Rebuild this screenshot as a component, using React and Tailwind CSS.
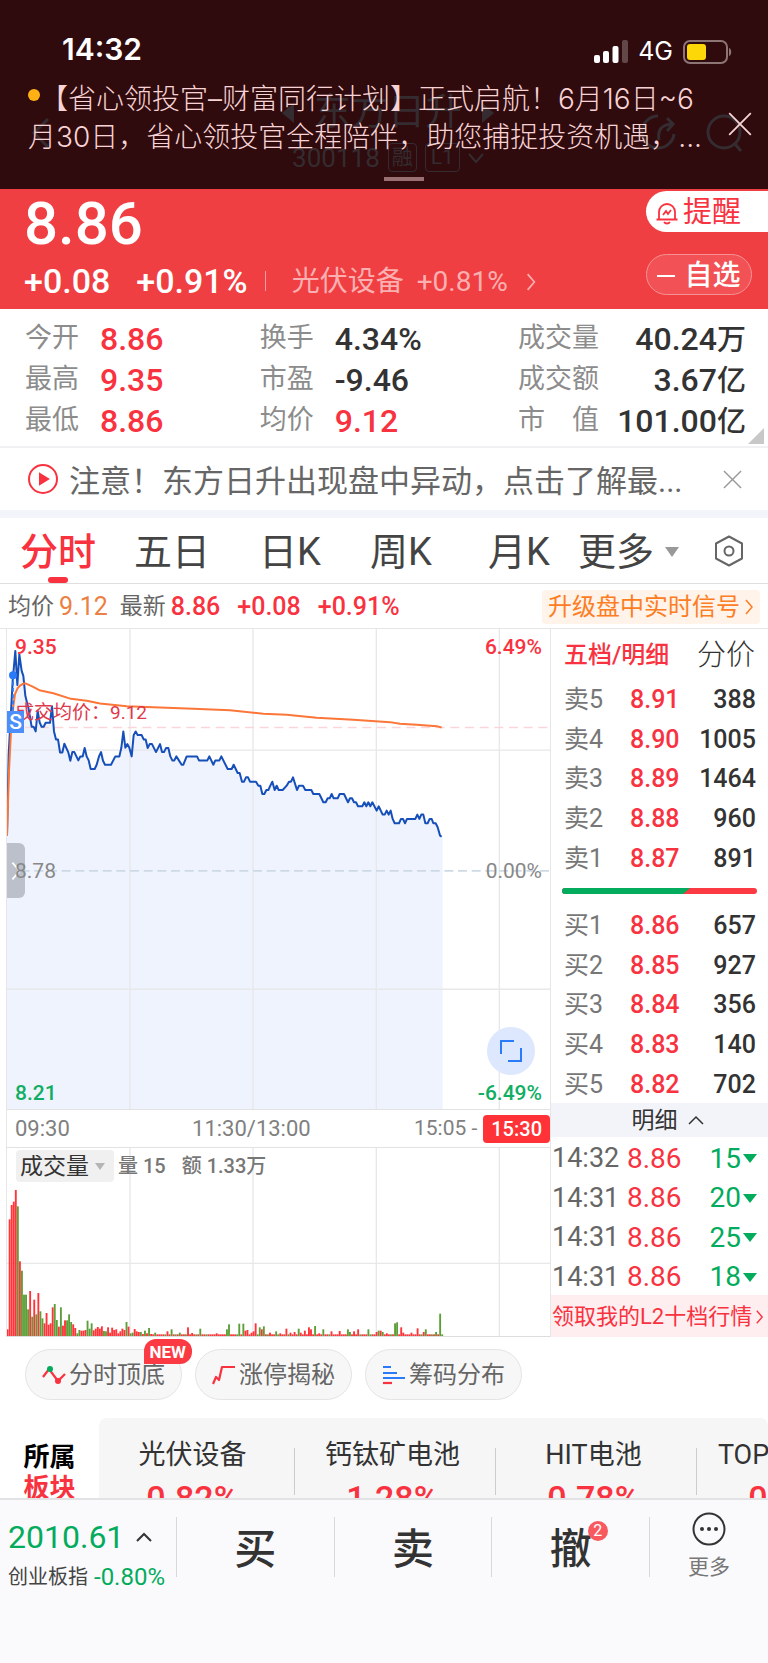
import { clsx } from 'clsx';

const STATS = [
  [
    { label: '今开', value: '8.86', up: true },
    { label: '最高', value: '9.35', up: true },
    { label: '最低', value: '8.86', up: true },
  ],
  [
    { label: '换手', value: '4.34%' },
    { label: '市盈', value: '-9.46' },
    { label: '均价', value: '9.12', up: true },
  ],
  [
    { label: '成交量', value: '40.24', unit: '万' },
    { label: '成交额', value: '3.67', unit: '亿' },
    { label: '市　值', value: '101.00', unit: '亿' },
  ],
];

const SELLS = [
  ['卖5', '8.91', 388],
  ['卖4', '8.90', 1005],
  ['卖3', '8.89', 1464],
  ['卖2', '8.88', 960],
  ['卖1', '8.87', 891],
];

const BUYS = [
  ['买1', '8.86', 657],
  ['买2', '8.85', 927],
  ['买3', '8.84', 356],
  ['买4', '8.83', 140],
  ['买5', '8.82', 702],
];

const TRADES = [
  ['14:32', '8.86', 15],
  ['14:31', '8.86', 20],
  ['14:31', '8.86', 25],
  ['14:31', '8.86', 18],
];

const SECTORS = [
  ['光伏设备', '0.82%'],
  ['钙钛矿电池', '1.28%'],
  ['HIT电池', '0.78%'],
  ['TOPCon电池', '0.91%'],
];

const PRICE_LINE =
  '21,645 26,400 32,290 38,180 46,90 52,192 58,100 65,150 70,165 76,225 86,265 95,318 101,318 107,332 113,270 119,305 125,318 131,318 137,306 150,306 156,256 162,332 168,356 174,356 180,395 187,395 193,369 205,395 211,420 217,394 223,394 235,419 241,407 248,407 254,382 260,407 266,419 272,445 284,445 290,432 297,407 303,394 309,420 315,432 333,432 346,407 358,407 364,381 370,332 376,381 382,370 388,381 395,407 401,343 407,332 413,343 425,343 431,356 437,356 443,382 449,370 456,370 468,394 474,382 480,370 486,394 492,394 498,382 505,382 511,407 517,419 523,419 529,407 545,432 550,432 560,407 591,407 597,419 622,419 628,407 640,432 646,419 658,419 664,407 683,445 695,445 701,432 713,457 719,457 726,483 732,483 738,470 744,470 750,483 768,483 775,495 781,495 787,520 793,520 799,508 805,508 811,495 817,483 824,508 830,495 836,508 848,508 860,495 867,483 873,483 879,470 891,508 897,495 909,495 916,508 934,508 940,520 958,520 970,545 977,545 983,533 989,533 995,520 1001,533 1013,533 1019,520 1032,520 1044,545 1050,533 1056,533 1062,545 1068,545 1074,557 1087,557 1093,545 1099,557 1105,545 1111,557 1117,545 1130,570 1136,557 1148,582 1154,582 1160,570 1166,582 1172,570 1178,595 1184,608 1197,608 1203,595 1209,595 1215,608 1221,595 1246,595 1252,582 1258,595 1264,582 1270,582 1276,608 1283,608 1289,595 1295,595 1300,608 1307,608 1313,620 1320,645 1325,648';

const AVG_LINE =
  '21,645 27,450 33,330 38,270 45,220 53,202 60,194 70,188 78,188 95,196 118,208 160,217 213,234 260,240 300,248 380,256 480,260 580,264 690,268 790,279 860,282 950,291 1060,297 1170,304 1200,309 1250,312 1310,316 1325,320';

// Volume per minute; a negative number is a falling minute.
const VOLUME_OPEN = [
  20, 350, 393, 403, 438, -389, 224, -196, -124, -124, -80, 135, -58, 109, -65, 129, -74, -53, 38, 69, 34, 38, 86, -96,
  -48, 28, -86, 31, 47, -47, -65, -42, 35, 24, -8, -18, 16, 16, 18, -46, -22, -38, 17, 22, 27, 22, 29, -15, -14, 26, 10,
  25, 18, 20, 8, 14, 22, 18, -42, 28, -8, -10, 21, 14, 12, -12, 6, -16, 8, -24, 6, 5, -10,
];
const VOLUME_SPIKES = {
  78: 14, 80: -20, 84: -10, 88: 26, 90: 9, 94: -22, 102: 8, 107: -20, 108: -35, 113: -37, 115: -37, 116: 16, 117: 18,
  119: 10, 120: 14, 121: 38, 123: -26, 124: 20, 125: -29, 128: 10, 131: -14, 133: 8, 136: 22, 138: 10, 140: 12,
  142: -22, 143: 10, 145: 16, 147: 26, 148: 20, 150: -30, 152: 8, 154: -20, 158: 14, 162: 15, 166: -20, 167: -12,
  169: 14, 171: 20, 176: -20, 180: 12, 181: -16, 182: 16, 183: -12, 185: 8, 189: -38, 190: -41, 192: 26, 193: 10,
  197: 10, 200: 23, 203: 12, 204: -20, 209: -12, 211: -67,
};
const VOLUME = Array.from({ length: 213 }, (_, i) => VOLUME_OPEN[i] ?? VOLUME_SPIKES[i] ?? (i % 5 === 2 ? -5 : 5));

export default function App() {
  return (
    <div
      lang="zh-CN"
      className="w-full overflow-hidden bg-white font-['Roboto','Noto_Sans_CJK_SC',sans-serif] leading-none text-[#333]"
    >
      <Header />
      <Quote />
      <Stats />
      <Notice />
      <Tabs />
      <PriceSummary />
      <main className="flex border-t border-[#e6e6e6]">
        <Charts />
        <OrderBook />
      </main>
      <Tools />
      <Sectors />
      <BottomBar />
    </div>
  );
}

function Chevron({ className, d = 'M2 1l6 7-6 7' }) {
  return (
    <svg viewBox="0 0 10 16" className={className} fill="none" stroke="currentColor" strokeWidth="1.5">
      <path d={d} />
    </svg>
  );
}

function Cross({ className }) {
  return (
    <svg viewBox="0 0 20 20" className={className} fill="none" stroke="currentColor" strokeWidth="1.5">
      <path d="M1 1l18 18M19 1L1 19" />
    </svg>
  );
}

/** Status bar and announcement, laid over the dimmed title bar. */
function Header() {
  return (
    <header className="relative h-[189px] bg-[#2f0b0d]">
      <TitleBar />
      <div className="relative flex h-full flex-col font-['Inter','Noto_Sans_CJK_SC',sans-serif]">
        <div className="flex h-20 items-end justify-between pr-9 pb-4 pl-[62px] text-white">
          <time className="text-[30px] font-semibold">14:32</time>
          <div className="flex items-center gap-[10px]">
            <svg viewBox="0 0 34 23" className="h-[23px] w-[34px]" fill="#fff">
              <rect y="15" width="6" height="8" rx="2" />
              <rect x="9" y="11" width="6" height="12" rx="2" />
              <rect x="18.500" y="6" width="6" height="17" rx="2" />
              <rect x="28" y="0" width="6" height="23" rx="2" fillOpacity=".25" />
            </svg>
            <span className="text-[25px]">4G</span>
            <svg viewBox="0 0 49 24" className="h-6 w-[49px]">
              <rect x="1" y="1" width="43" height="22" rx="6" fill="none" stroke="#8d7576" strokeWidth="2" />
              <rect x="4" y="4" width="19" height="16" rx="3" fill="#fed709" />
              <path d="M46 8c3 1 3 7 0 8z" fill="#8d7576" />
            </svg>
          </div>
        </div>
        <div className="flex items-center justify-between pr-4 pl-7 text-[#f8d3d5]">
          <p className="text-[28px] leading-[38px] font-light whitespace-nowrap">
            <i className="inline-block h-3 w-3 -translate-y-2 rounded-full bg-[#ffb014]" />
            【省心领投官–财富同行计划】正式启航！6月16日~6
            <br />
            月30日，省心领投官全程陪伴，助您捕捉投资机遇，...
          </p>
          <button type="button" aria-label="关闭公告" className="pt-3">
            <Cross className="h-6 w-6" />
          </button>
        </div>
        <span className="mt-[21px] ml-[50%] h-1 w-10 bg-[#9a6f72]" />
      </div>
    </header>
  );
}

function TitleBar() {
  return (
    <div className="absolute inset-x-0 top-[94px] flex items-center justify-between pr-6 pl-[30px] text-[#342c30]">
      <Chevron className="h-8 w-5" d="M9 1L2 8l7 7" />
      <div className="ml-[86px] flex flex-col items-center gap-3">
        <div className="flex items-center gap-5">
          <svg viewBox="0 0 12 20" className="h-5 w-3" fill="currentColor"><path d="M12 0v20L0 10z" /></svg>
          <h1 className="text-[37px] font-normal">东方日升</h1>
          <svg viewBox="0 0 12 20" className="h-5 w-3" fill="currentColor"><path d="M0 0v20l12-10z" /></svg>
        </div>
        <div className="flex items-center gap-2 text-[26px]">
          300118
          <span className="rounded border border-current p-[3px] text-[21px]">融</span>
          <span className="rounded border border-current px-[5px] py-[3px] text-[21px]">L1</span>
          <svg viewBox="0 0 16 10" className="h-[10px] w-4" fill="none" stroke="currentColor" strokeWidth="2">
            <path d="M1 1l7 8 7-8" />
          </svg>
        </div>
      </div>
      <div className="flex gap-[30px]">
        <svg viewBox="0 0 36 36" className="h-9 w-9" fill="none" stroke="currentColor" strokeWidth="3">
          <path d="M18 2A16 16 0 1 0 34 20M19 26c-2-10 3-16 14-16M27 4l6 6-6 7" />
        </svg>
        <svg viewBox="0 0 38 38" className="h-[38px] w-[38px]" fill="none" stroke="currentColor" strokeWidth="3">
          <circle cx="18" cy="18" r="16" />
          <path d="M29 30l6 7" />
        </svg>
      </div>
    </div>
  );
}

function Quote() {
  return (
    <section className="flex h-[120px] justify-between bg-[#f03f42] text-white">
      <div className="pt-1 pl-6">
        <strong className="block text-[60px] leading-[62px] font-medium">8.86</strong>
        <div className="mt-[9px] flex items-center text-[34px] font-medium">
          <span>+0.08</span>
          <span className="ml-[26px]">+0.91%</span>
          <span className="mr-[26px] ml-[17px] h-5 w-px bg-[#f79c9e]" />
          <a href="#sector" className="flex items-center pt-[2px] text-[28px] font-normal text-[#fab0b1]">
            光伏设备
            <span className="ml-[13px]">+0.81%</span>
            <Chevron className="ml-[17px] h-[18px] w-3" />
          </a>
        </div>
      </div>
      <div className="flex flex-col items-end pt-[2px]">
        <button
          type="button"
          className="flex h-[41px] w-[122px] items-center gap-1 rounded-l-full bg-white pt-[2px] pl-[9px] text-[29px] text-[#f9323f]"
        >
          <svg viewBox="0 0 24 24" className="h-6 w-6" fill="none" stroke="currentColor" strokeWidth="1.8">
            <path d="M4 18v-7a8 8 0 0 1 16 0v7M1.500 18.500h21M9 21c1.500 2 4.500 2 6 0M8 14l3-4 2 3 3-4" />
          </svg>
          提醒
        </button>
        <button
          type="button"
          className="mt-[22px] mr-4 flex h-[41px] w-[106px] items-center justify-center gap-[9px] rounded-full border border-[#f79294] bg-[#f25255] pt-[2px] text-[28px] font-medium"
        >
          <span className="h-[2px] w-[18px] bg-white" />
          自选
        </button>
      </div>
    </section>
  );
}

function Stats() {
  return (
    <section className="relative flex h-[139px] justify-between border-b-2 border-[#f1f1f3] pr-[22px] pl-[25px] pt-[9px]">
      {STATS.map((column, i) => (
        <dl key={i} className="flex flex-col">
          {column.map((s) => (
            <div key={s.label} className="flex h-[41px] items-center">
              <dt className={clsx('text-[27px] text-[#8c8c8c]', i === 2 ? 'w-[97px]' : 'w-[75px]')}>{s.label}</dt>
              <dd
                className={clsx(
                  'text-[32px] font-medium whitespace-nowrap',
                  s.up && 'text-[#f9323f]',
                  i === 2 && 'w-[131px] text-right'
                )}
              >
                {s.value}
                {s.unit && <span className="text-[29px]">{s.unit}</span>}
              </dd>
            </div>
          ))}
        </dl>
      ))}
      <svg viewBox="0 0 16 16" className="absolute right-1 bottom-[2px] h-4 w-4" fill="#c8c8c8">
        <path d="M16 0v16H0z" />
      </svg>
    </section>
  );
}

function Notice() {
  return (
    <section className="flex h-[70px] items-center border-b-8 border-[#f3f5fa] pr-[26px] pl-7 text-[#666]">
      <svg viewBox="0 0 30 30" className="h-[30px] w-[30px]" fill="none" stroke="#f9323f" strokeWidth="2">
        <circle cx="15" cy="15" r="14" />
        <path d="M12 10l8 5-8 5z" fill="#f9323f" />
      </svg>
      <a href="#alert" className="ml-[11px] flex-1 pt-1 text-[31px] whitespace-nowrap">
        注意！东方日升出现盘中异动，点击了解最...
      </a>
      <button type="button" aria-label="关闭提示" className="text-[#999]">
        <Cross className="h-[19px] w-[19px]" />
      </button>
    </section>
  );
}

function Tabs() {
  return (
    <nav className="grid h-[66px] grid-cols-[114fr_125fr_111fr_118fr_90fr_136fr_30px] items-center border-b border-[#dfdfdf] pr-6 pl-5 text-[38px] text-[#444]">
      <button type="button" className="relative h-full justify-self-start pt-[2px] font-medium text-[#f9323f]">
        分时
        <span className="absolute bottom-0 left-1/2 h-[6px] w-5 -translate-x-1/2 rounded-full bg-[#f9323f]" />
      </button>
      <button type="button" className="pt-[2px] text-left">五日</button>
      <button type="button" className="pt-[2px] text-left">日K</button>
      <button type="button" className="pt-[2px] text-left">周K</button>
      <button type="button" className="pt-[2px] text-left">月K</button>
      <button type="button" className="flex items-center gap-[11px] pt-[2px]">
        更多
        <svg viewBox="0 0 14 10" className="h-[10px] w-[14px]" fill="#999"><path d="M0 0h14L7 10z" /></svg>
      </button>
      <button type="button" aria-label="设置">
        <svg viewBox="0 0 30 32" className="h-8 w-[30px]" fill="none" stroke="#666" strokeWidth="2" strokeLinejoin="round">
          <path d="M15 1.500l13 7v15l-13 7-13-7v-15z" />
          <circle cx="15" cy="16" r="4.500" />
        </svg>
      </button>
    </nav>
  );
}

function PriceSummary() {
  return (
    <div className="flex h-[44px] items-center px-2 pt-px text-[25px] font-medium text-[#f9323f]">
      <span className="text-[23px] font-normal text-[#666]">均价</span>
      <span className="ml-[5px] font-normal text-[#ec7f43]">9.12</span>
      <span className="ml-3 text-[23px] font-normal text-[#666]">最新</span>
      <span className="ml-[5px]">8.86</span>
      <span className="ml-[17px]">+0.08</span>
      <span className="ml-[17px]">+0.91%</span>
      <a
        href="#signal"
        className="ml-auto flex h-[34px] items-center gap-1 rounded bg-[#fff3ea] px-[6px] text-[24px] font-normal text-[#fd7d23]"
      >
        升级盘中实时信号
        <Chevron className="h-[18px] w-[10px]" />
      </a>
    </div>
  );
}

function Charts() {
  return (
    <div className="ml-[6px] min-w-0 flex-1 border-x border-[#e6e6e6] text-[21px]">
      <PriceChart />
      <div className="relative flex h-[39px] items-center justify-between border-y border-[#e2e2e2] pl-2 text-[#808080]">
        <span className="text-[22px]">09:30</span>
        <span className="absolute left-[45%] -translate-x-1/2 text-[22px]">11:30/13:00</span>
        <span className="flex items-center gap-[6px]">
          15:05 -
          <b className="rounded bg-[#ff3237] px-2 py-1 text-[20px] leading-5 font-medium text-white">15:30</b>
        </span>
      </div>
      <VolumeChart />
    </div>
  );
}

function PriceChart() {
  return (
    <div className="relative h-[480px]">
      <svg viewBox="21 24 1629 1443" preserveAspectRatio="none" className="h-full w-full" fill="none">
        <polygon points={`21,1467 ${PRICE_LINE} 1328,648 1328,1467`} fill="#eff3fe" />
        <path d="M390 24v1443M759 24v1443M1129 24v1443M1498 24v1443M21 388h1629M21 1107h1629" stroke="#e8e8ea" strokeWidth="4" />
        <path d="M21 751h1629" stroke="#cddae6" strokeWidth="5" strokeDasharray="27 14" />
        <path d="M75 320h1575" stroke="#fbd5d9" strokeWidth="5" strokeDasharray="27 17" />
        <polyline points={PRICE_LINE} stroke="#164fba" strokeWidth="6" strokeLinejoin="round" />
        <polyline points={AVG_LINE} stroke="#fb7638" strokeWidth="6" strokeLinejoin="round" />
        <path d="M39 163v110" stroke="#2a7bfa" strokeWidth="5" strokeDasharray="12 7" />
        <circle cx="39" cy="163" r="12" fill="#2a7bfa" />
      </svg>
      <span className="absolute top-[74px] left-2 text-[19px] text-[#e0384b]">成交均价：9.12</span>
      <span className="absolute top-[82px] left-0 h-[22px] w-[17px] bg-[#4c8ffb] text-center text-[21px] leading-[22px] font-medium text-white">
        S
      </span>
      <button
        type="button"
        aria-label="展开侧栏"
        className="absolute top-[214px] left-0 flex h-[55px] w-[18px] items-center justify-center rounded-r-md bg-[#bbc0cb] text-white"
      >
        <Chevron className="h-5 w-3" />
      </button>
      <span className="absolute top-2 left-2 font-medium text-[#f9323f]">9.35</span>
      <span className="absolute top-2 right-2 font-medium text-[#f9323f]">6.49%</span>
      <span className="absolute top-[232px] left-2 text-[#888]">8.78</span>
      <span className="absolute top-[232px] right-2 text-[#888]">0.00%</span>
      <span className="absolute bottom-[5px] left-2 font-medium text-[#0fae63]">8.21</span>
      <span className="absolute right-2 bottom-[5px] font-medium text-[#0fae63]">-6.49%</span>
      <button
        type="button"
        aria-label="全屏"
        className="absolute right-[15px] bottom-[34px] flex h-12 w-12 items-center justify-center rounded-full bg-[#dde7fd]"
      >
        <svg viewBox="0 0 22 22" className="h-[22px] w-[22px]" fill="none" stroke="#2a7bfa" strokeWidth="2">
          <path d="M1 14V1h13M21 8v13H8" />
        </svg>
      </button>
    </div>
  );
}

function VolumeChart() {
  return (
    <div className="relative h-[189px] border-b border-[#ddd]">
      <svg viewBox="0 0 1629 564" preserveAspectRatio="none" className="h-full w-full">
        <path d="M369 0v564M738 0v564M1108 0v564M1477 0v564M0 346h1629" stroke="#e8e8ea" strokeWidth="4" />
        {VOLUME.map((v, i) => (
          <rect
            key={i}
            x={i * 6.15 - 1}
            y={564 - Math.abs(v)}
            width="5.6"
            height={Math.abs(v)}
            fill={v > 0 ? '#ff3338' : '#5c9f38'}
          />
        ))}
      </svg>
      <div className="absolute top-[2px] left-[9px] flex items-center text-[20px] text-[#777]">
        <label className="relative flex items-center">
          <select
            aria-label="副图指标"
            className="h-8 w-[98px] appearance-none rounded bg-[#f0f0f0] pl-1 text-[23px] text-[#333]"
          >
            <option>成交量</option>
            <option>成交额</option>
          </select>
          <svg viewBox="0 0 10 7" className="absolute right-[9px] h-[7px] w-[10px]" fill="#b5b5b5">
            <path d="M0 0h10L5 7z" />
          </svg>
        </label>
        <span className="ml-1 font-medium">量 15</span>
        <span className="ml-4 font-medium">额 1.33万</span>
      </div>
    </div>
  );
}

function BookTable({ rows, label, className }) {
  return (
    <table aria-label={label} className={clsx('w-full table-fixed text-[25px]', className)}>
      <tbody>
        {rows.map(([level, price, qty]) => (
          <tr key={level}>
            <th scope="row" className="w-[79px] pt-[2px] pl-[13px] text-left font-normal text-[#777]">
              {level}
            </th>
            <td className="pt-[2px] font-medium text-[#f9323f]">{price}</td>
            <td className="pt-[2px] pr-3 text-right font-medium">{qty}</td>
          </tr>
        ))}
      </tbody>
    </table>
  );
}

function OrderBook() {
  return (
    <aside className="w-[217px]">
      <div className="flex h-[50px] items-center justify-between pt-[2px] pr-[13px] pl-[13px]">
        <button type="button" className="text-[24px] font-medium text-[#f9323f]">五档/明细</button>
        <button type="button" className="text-[29px] font-light">分价</button>
      </div>
      <BookTable rows={SELLS} label="卖盘" className="h-[198px]" />
      <div className="flex h-[28px] items-center px-[11px]">
        <svg viewBox="0 0 195 6" preserveAspectRatio="none" className="h-[6px] w-full rounded-full">
          <path d="M0 0h195v6H0z" fill="#fb3a43" />
          <path d="M0 0h128l-7 6H0z" fill="#03ab5c" />
        </svg>
      </div>
      <BookTable rows={BUYS} label="买盘" className="h-[198px]" />
      <button type="button" className="flex h-[34px] w-full items-center justify-center gap-[10px] bg-[#f3f4f9] pl-4 text-[23px]">
        明细
        <svg viewBox="0 0 16 10" className="h-[10px] w-4" fill="none" stroke="currentColor" strokeWidth="1.5">
          <path d="M1 9l7-7 7 7" />
        </svg>
      </button>
      <table aria-label="成交明细" className="h-[158px] w-full table-fixed text-[28px]">
        <tbody>
          {TRADES.map(([time, price, qty], i) => (
            <tr key={i}>
              <td className="w-[76px] pt-1 pl-px text-[27px] text-[#666]">{time}</td>
              <td className="pt-1 text-[#f9323f]">{price}</td>
              <td className="pt-1 pr-[11px]">
                <span className="flex items-center justify-end gap-[2px] text-[#03ab5c]">
                  {qty}
                  <svg viewBox="0 0 14 9" className="h-[9px] w-[14px]" fill="currentColor"><path d="M0 0h14L7 9z" /></svg>
                </span>
              </td>
            </tr>
          ))}
        </tbody>
      </table>
      <a href="#l2" className="flex h-[42px] items-center justify-between bg-[#ffeef0] pt-px pr-1 pl-px text-[22px] whitespace-nowrap text-[#f9323f]">
        领取我的L2十档行情
        <Chevron className="h-4 w-[9px]" />
      </a>
    </aside>
  );
}

function ToolButton({ label, children }) {
  return (
    <button
      type="button"
      className="relative flex h-[51px] w-[157px] items-center justify-center gap-[3px] rounded-full border border-[#e4e4e4] bg-[#f7f7f7] text-[24px] text-[#666]"
    >
      {children}
      {label}
    </button>
  );
}

function Tools() {
  return (
    <section className="flex h-[81px] gap-[13px] pt-3 pl-[25px]">
      <ToolButton label="分时顶底">
        <svg viewBox="0 0 24 20" className="h-5 w-6" fill="none" stroke="#f9323f" strokeWidth="2.200">
          <path d="M1 12l6-8 9 12 7-7" />
          <circle cx="8" cy="4" r="3" fill="#03ab5c" stroke="none" />
          <circle cx="16" cy="16" r="3" fill="#f9323f" stroke="none" />
        </svg>
        <span className="absolute -top-[11px] -right-[11px] h-[25px] rounded-[12px] rounded-bl-none bg-[#fb3a43] px-[6px] text-[17px] leading-[26px] font-bold text-white">
          NEW
        </span>
      </ToolButton>
      <ToolButton label="涨停揭秘">
        <svg viewBox="0 0 24 20" className="h-5 w-6" fill="none" stroke="#f9323f" strokeWidth="2.200" strokeLinejoin="round">
          <path d="M1 19l3-7 3 3 3-13h13" />
        </svg>
      </ToolButton>
      <ToolButton label="筹码分布">
        <svg viewBox="0 0 24 20" className="h-5 w-6" fill="none" stroke="#2a7bfa" strokeWidth="2.200">
          <path d="M1 2h8M1 8h14M1 13h22" />
          <path d="M1 18h9" stroke="#f9323f" />
        </svg>
      </ToolButton>
    </section>
  );
}

function Sectors() {
  return (
    <section className="flex h-20 overflow-hidden">
      <h2 className="w-[99px] shrink-0 pt-6 text-center text-[26px] leading-[31px] font-bold text-black">
        所属
        <br />
        <span className="text-[#f9323f]">板块</span>
      </h2>
      <ul className="flex min-w-0 flex-1 overflow-hidden rounded-t-lg bg-[#f6f6f7]">
        {SECTORS.map(([name, change], i) => (
          <li key={name} className={clsx('relative shrink-0 pt-[22px] pr-1 text-center', i === 0 ? 'w-[195px] pr-2' : 'w-[201px]')}>
            {i > 0 && <span className="absolute top-[30px] left-0 h-[47px] w-px bg-[#ccc]" />}
            <span className="block text-[27px] leading-[30px] whitespace-nowrap">{name}</span>
            <span className="mt-[8px] block text-[34px] leading-10 font-medium text-[#f9323f]">{change}</span>
          </li>
        ))}
      </ul>
    </section>
  );
}

function BottomBar() {
  return (
    <footer className="flex h-[165px] border-t-2 border-[#e2e2e4] bg-[#fafafc] pt-[17px]">
      <div className="w-[176px] pl-2">
        <div className="flex h-10 items-center gap-3 text-[32px] text-[#03ab5c]">
          2010.61
          <svg viewBox="0 0 16 10" className="h-[10px] w-4" fill="none" stroke="#333" strokeWidth="2">
            <path d="M1 9l7-7 7 7" />
          </svg>
        </div>
        <div className="flex h-10 items-center gap-[6px] text-[20px] whitespace-nowrap text-[#444]">
          创业板指
          <span className="text-[24px] text-[#03ab5c]">-0.80%</span>
        </div>
      </div>
      <TradeButton>买</TradeButton>
      <TradeButton>卖</TradeButton>
      <TradeButton>
        撤
        <span className="absolute -top-2 -right-4 h-5 w-5 rounded-full bg-[#f7595f] text-center text-[16px] leading-5 font-normal text-white">
          2
        </span>
      </TradeButton>
      <button type="button" className="flex h-[60px] w-[119px] flex-col items-center gap-[11px] border-l border-[#d9d9dc] text-[21px] text-[#777]">
        <svg viewBox="0 0 34 34" className="-mt-[5px] h-[34px] w-[34px] shrink-0" fill="none" stroke="#333" strokeWidth="2">
          <circle cx="17" cy="17" r="15.500" />
          <g fill="#333" stroke="none">
            <circle cx="10" cy="17" r="2" />
            <circle cx="17" cy="17" r="2" />
            <circle cx="24" cy="17" r="2" />
          </g>
        </svg>
        更多
      </button>
    </footer>
  );
}

function TradeButton({ children }) {
  return (
    <button type="button" className="flex h-[60px] flex-1 items-center justify-center border-l border-[#d9d9dc] pt-[6px] text-[42px] font-medium">
      <span className="relative">{children}</span>
    </button>
  );
}
